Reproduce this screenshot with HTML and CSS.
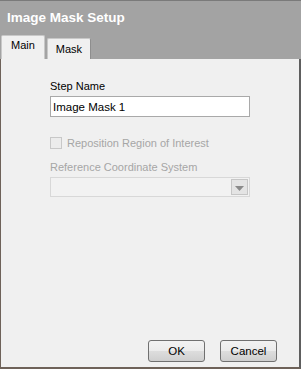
FILE: index.html
```html
<!DOCTYPE html>
<html lang="en">
<head>
<meta charset="UTF-8">
<title>Image Mask Setup</title>
<link rel="stylesheet" href="styles.css">
</head>
<body>

<div class="dialog">
  <div class="titlebar">
    <h1 class="title">Image Mask Setup</h1>
    <div class="tabs">
      <div class="tab active">Main</div>
      <div class="tab">Mask</div>
    </div>
  </div>

  <div class="panel">
    <div class="form">
      <label class="label" for="stepName">Step Name</label>
      <input class="text-input" type="text" id="stepName" value="Image Mask 1">

      <div class="check-row">
        <span class="checkbox"></span>
        <span class="muted">Reposition Region of Interest</span>
      </div>

      <div class="label muted">Reference Coordinate System</div>
      <div class="select">
        <span class="select-btn">
          <svg width="9" height="5" viewBox="0 0 9 5"><path d="M0 0h9L4.5 5z" fill="#8a8a8a"/></svg>
        </span>
      </div>
    </div>

    <div class="actions">
      <button class="btn">OK</button>
      <button class="btn">Cancel</button>
    </div>
  </div>
</div>

</body>
</html>
```

FILE: styles.css
```css
html, body {
  margin: 0;
  padding: 0;
  background: #a3a3a3;
}
.dialog {
  width: 301px;
  height: 369px;
  display: flex;
  flex-direction: column;
  font-family: "Liberation Sans", Arial, sans-serif;
  font-size: 11px;
  color: #000;
}
.titlebar {
  background: #a3a3a3;
  border-top: 1px solid #7a7a7a;
  height: 58px;
  display: flex;
  flex-direction: column;
  justify-content: space-between;
}
.title {
  margin: 0;
  padding: 9px 0 0 7px;
  font-size: 13.5px;
  font-weight: bold;
  color: #fff;
  line-height: 16px;
}
.tabs {
  display: flex;
  align-items: flex-end;
  padding-left: 1px;
  gap: 2px;
}
.tab {
  background: #f0f0f0;
  border: 1px solid #c8c8c8;
  border-bottom: none;
  border-right: 1px solid #8e8e8e;
  border-radius: 2px 2px 0 0;
  height: 20px;
  line-height: 21px;
  padding: 0 8px;
}
.tab.active {
  height: 23px;
  line-height: 19px;
  padding: 0 9px;
  border-right-color: #c8c8c8;
}
.panel {
  flex: 1;
  background: #f0f0f0;
  border-left: 1px solid #6e6259;
  border-right: 2px solid #5e5e5e;
  border-bottom: 2px solid #6e6259;
  display: flex;
  flex-direction: column;
  justify-content: space-between;
}
.form {
  display: flex;
  flex-direction: column;
  padding: 20px 0 0 49px;
  width: 200px;
}
.label {
  display: block;
  line-height: 14px;
  margin-bottom: 3px;
}
.text-input {
  box-sizing: border-box;
  width: 200px;
  height: 21px;
  margin: 0;
  border: 1px solid #a9a9a9;
  background: #fff;
  padding: 0 2px;
  font-family: "Liberation Sans", Arial, sans-serif;
  font-size: 11.5px;
}
.check-row {
  display: flex;
  align-items: center;
  gap: 5px;
  margin: 19px 0 10px;
  line-height: 14px;
}
.checkbox {
  box-sizing: border-box;
  width: 12px;
  height: 12px;
  border: 1px solid #c8c8c8;
  background: #ececec;
}
.muted {
  color: #a6a6a6;
}
.select {
  box-sizing: border-box;
  width: 200px;
  height: 20px;
  border: 1px solid #d8d8d8;
  background: #f2f2f2;
  display: flex;
  justify-content: flex-end;
  align-items: center;
  padding-right: 1px;
}
.select-btn {
  box-sizing: border-box;
  width: 17px;
  height: 16px;
  border: 1px solid #c6c6c6;
  background: #e4e4e4;
  display: flex;
  justify-content: center;
  align-items: center;
  padding-top: 3px;
}
.actions {
  display: flex;
  justify-content: flex-end;
  gap: 15px;
  padding: 0 22px 5px 0;
}
.btn {
  width: 57px;
  height: 22px;
  border: 1px solid #707070;
  border-radius: 3px;
  background: linear-gradient(#f2f2f2 0%, #ebebeb 50%, #dddddd 51%, #cfcfcf 100%);
  font-family: "Liberation Sans", Arial, sans-serif;
  font-size: 11.5px;
  color: #000;
  padding: 0;
}
```
